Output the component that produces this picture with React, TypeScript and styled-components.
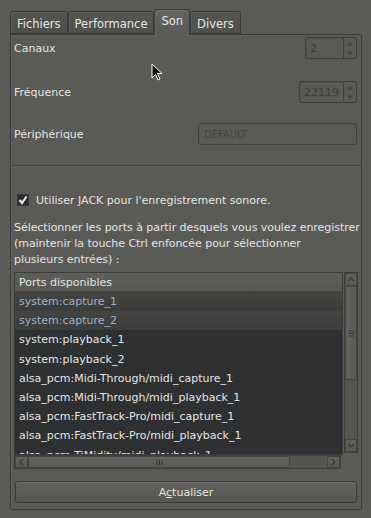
import React from "react";
import styled, { createGlobalStyle } from "styled-components";

const GlobalStyle = createGlobalStyle`
  html, body {
    margin: 0;
    padding: 0;
    background: #5a5b57;
  }
  body {
    font-family: "DejaVu Sans", "Liberation Sans", sans-serif;
    font-size: 11px;
    color: #e4e4e2;
  }
`;

const Window = styled.div`
  position: relative;
  width: 371px;
  height: 518px;
  box-sizing: border-box;
  padding: 10px 9px 8px 10px;
  display: flex;
  flex-direction: column;
  background: #5a5b57;
  overflow: hidden;
`;

const TabBar = styled.div`
  display: flex;
  align-items: flex-end;
  height: 25px;
  position: relative;
  z-index: 1;
  margin-bottom: -1px;
`;

const Tab = styled.div<{ $active?: boolean }>`
  box-sizing: border-box;
  height: ${(p) => (p.$active ? "26px" : "23px")};
  padding: ${(p) => (p.$active ? "4px 6px 0" : "5px 6px 0")};
  margin-bottom: ${(p) => (p.$active ? "0" : "1px")};
  border: 1px solid #3c3d3a;
  border-bottom: ${(p) => (p.$active ? "none" : "1px solid #3c3d3a")};
  border-radius: 3px 3px 0 0;
  background: ${(p) =>
    p.$active
      ? "linear-gradient(#63645f, #5a5b57)"
      : "linear-gradient(#555652, #4f504c)"};
  box-shadow: inset 1px 1px 0 rgba(255, 255, 255, 0.06);
  color: #e6e6e4;
  font-size: 11.5px;
  white-space: nowrap;
`;

const Panel = styled.div`
  flex: 1;
  box-sizing: border-box;
  border: 1px solid #3c3d3a;
  border-radius: 0 2px 2px 2px;
  padding: 2px 4px 6px 3px;
  display: flex;
  flex-direction: column;
  box-shadow: inset 1px 1px 0 rgba(255, 255, 255, 0.04);
`;

const FormRow = styled.div<{ $gap: number }>`
  display: flex;
  align-items: center;
  justify-content: space-between;
  height: 22px;
  margin-bottom: ${(p) => p.$gap}px;
  font-size: 11px;
`;

const SpinBox = styled.div<{ $width: number }>`
  display: flex;
  width: ${(p) => p.$width}px;
  height: 22px;
  box-sizing: border-box;
  border: 1px solid #40413e;
  border-radius: 2px;
`;

const SpinValue = styled.div`
  flex: 1;
  display: flex;
  align-items: center;
  padding-left: 4px;
  border-right: 1px solid #40413e;
  color: #3e3f3c;
  font-size: 11px;
  box-shadow: inset 1px 1px 0 rgba(0, 0, 0, 0.08);
`;

const SpinButtons = styled.div`
  width: 12px;
  display: flex;
  flex-direction: column;
  align-items: center;
  justify-content: space-around;
  color: #464744;
  font-size: 6px;
  line-height: 6px;
`;

const Entry = styled.div`
  width: 159px;
  height: 22px;
  box-sizing: border-box;
  border: 1px solid #41423f;
  border-radius: 3px;
  padding-left: 5px;
  display: flex;
  align-items: center;
  color: #454643;
  font-size: 10px;
`;

const Separator = styled.div`
  height: 0;
  margin: 0 -4px 0 -3px;
  border-top: 1px solid #454642;
  border-bottom: 1px solid #62635f;
`;

const CheckRow = styled.label`
  display: flex;
  align-items: center;
  gap: 7px;
  margin: 26px 0 0 3px;
  height: 14px;
  font-size: 11px;
`;

const CheckBox = styled.span`
  width: 12px;
  height: 12px;
  box-sizing: border-box;
  background: #2b2c2c;
  border: 1px solid #3a3b39;
  display: flex;
  align-items: center;
  justify-content: center;
`;

const Para = styled.p`
  margin: 13px -4px 4px 0;
  font-size: 11px;
  line-height: 16px;
  white-space: nowrap;
  letter-spacing: -0.05px;
`;

const ListArea = styled.div`
  display: grid;
  grid-template-columns: 329px 1fr;
  grid-template-rows: 183px 14px;
  column-gap: 1px;
`;

const ListBox = styled.div`
  background: #2e3032;
  border: 1px solid #3c3d3a;
  overflow: hidden;
`;

const ListHeader = styled.div`
  height: 19px;
  box-sizing: border-box;
  padding: 3px 0 0 4px;
  background: linear-gradient(#5e5f5b, #575854);
  border-bottom: 1px solid #454642;
  font-size: 11px;
`;

const ListRow = styled.div<{ $selected?: boolean }>`
  height: 19.2px;
  padding-left: 4px;
  display: flex;
  align-items: center;
  font-size: 11px;
  white-space: nowrap;
  color: ${(p) => (p.$selected ? "#9ab2cc" : "#e6e6e4")};
  background: ${(p) =>
    p.$selected ? "linear-gradient(#444543, #3b3c3b)" : "transparent"};
`;

const VScroll = styled.div`
  display: flex;
  flex-direction: column;
  width: 14px;
  height: 181px;
  box-sizing: border-box;
  border: 1px solid #3e3f3c;
  background: #555652;
`;

const HScroll = styled.div`
  display: flex;
  height: 14px;
  width: 327px;
  box-sizing: border-box;
  border: 1px solid #3e3f3c;
  background: #555652;
`;

const ArrowBtn = styled.div<{ $v?: boolean }>`
  ${(p) => (p.$v ? "height: 13px;" : "width: 13px;")}
  flex: none;
  display: flex;
  align-items: center;
  justify-content: center;
  background: linear-gradient(#61625e, #585955);
  box-sizing: border-box;
  border: 1px solid #464743;
`;

const Thumb = styled.div<{ $v?: boolean; $size: number }>`
  ${(p) => (p.$v ? `height: ${p.$size}px;` : `width: ${p.$size}px;`)}
  flex: none;
  display: flex;
  align-items: center;
  justify-content: center;
  box-sizing: border-box;
  border: 1px solid #464743;
  background: ${(p) =>
    p.$v
      ? "linear-gradient(90deg, #62635f, #5a5b57)"
      : "linear-gradient(#62635f, #5a5b57)"};
`;

const Trough = styled.div`
  flex: 1;
`;

const Button = styled.div`
  margin: 12px 0 0 1px;
  height: 22px;
  box-sizing: border-box;
  border: 1px solid #3c3d3a;
  border-radius: 3px;
  background: linear-gradient(#61625e, #575854);
  box-shadow: inset 0 1px 0 rgba(255, 255, 255, 0.06);
  display: flex;
  align-items: center;
  justify-content: center;
  font-size: 11px;
`;

const Mnemonic = styled.span`
  text-decoration: underline;
`;

const Cursor = styled.svg`
  position: absolute;
  left: 151px;
  top: 63px;
`;

const ports = [
  "system:capture_1",
  "system:capture_2",
  "system:playback_1",
  "system:playback_2",
  "alsa_pcm:Midi-Through/midi_capture_1",
  "alsa_pcm:Midi-Through/midi_playback_1",
  "alsa_pcm:FastTrack-Pro/midi_capture_1",
  "alsa_pcm:FastTrack-Pro/midi_playback_1",
  "alsa_pcm:TiMidity/midi_playback_1",
];

const Chevron = ({ dir }: { dir: "up" | "down" | "left" | "right" }) => {
  const pts = {
    up: "1,5 4,2 7,5",
    down: "1,2 4,5 7,2",
    left: "5,1 2,4 5,7",
    right: "2,1 5,4 2,7",
  }[dir];
  return (
    <svg width="8" height="8" viewBox="0 0 8 8">
      <polyline points={pts} fill="none" stroke="#3a3b38" strokeWidth="1.3" />
    </svg>
  );
};

const Grip = ({ v }: { v?: boolean }) => (
  <svg width="7" height="7" viewBox="0 0 7 7">
    {[1, 3.5, 6].map((o) =>
      v ? (
        <line key={o} x1="1" x2="6" y1={o} y2={o} stroke="#33342f" />
      ) : (
        <line key={o} y1="1" y2="6" x1={o} x2={o} stroke="#33342f" />
      )
    )}
  </svg>
);

export default function App() {
  return (
    <Window>
      <GlobalStyle />
      <TabBar>
        <Tab>Fichiers</Tab>
        <Tab>Performance</Tab>
        <Tab $active>Son</Tab>
        <Tab>Divers</Tab>
      </TabBar>
      <Panel>
        <FormRow $gap={22}>
          <span>Canaux</span>
          <SpinBox $width={52}>
            <SpinValue>2</SpinValue>
            <SpinButtons>
              <span>▲</span>
              <span>▼</span>
            </SpinButtons>
          </SpinBox>
        </FormRow>
        <FormRow $gap={20}>
          <span>Fréquence</span>
          <SpinBox $width={58}>
            <SpinValue>22119</SpinValue>
            <SpinButtons>
              <span>▲</span>
              <span>▼</span>
            </SpinButtons>
          </SpinBox>
        </FormRow>
        <FormRow $gap={20}>
          <span>Périphérique</span>
          <Entry>DEFAULT</Entry>
        </FormRow>
        <Separator />
        <CheckRow>
          <CheckBox>
            <svg width="10" height="10" viewBox="0 0 10 10">
              <polyline
                points="1.5,5 4,8 8.5,1.5"
                fill="none"
                stroke="#f0f0f0"
                strokeWidth="2"
              />
            </svg>
          </CheckBox>
          Utiliser JACK pour l'enregistrement sonore.
        </CheckRow>
        <Para>
          Sélectionner les ports à partir desquels vous voulez enregistrer
          <br />
          (maintenir la touche Ctrl enfoncée pour sélectionner
          <br />
          plusieurs entrées) :
        </Para>
        <ListArea>
          <ListBox>
            <ListHeader>Ports disponibles</ListHeader>
            {ports.map((p, i) => (
              <ListRow key={p} $selected={i < 2}>
                {p}
              </ListRow>
            ))}
          </ListBox>
          <VScroll>
            <ArrowBtn $v>
              <Chevron dir="up" />
            </ArrowBtn>
            <Thumb $v $size={94}>
              <Grip v />
            </Thumb>
            <Trough />
            <ArrowBtn $v>
              <Chevron dir="down" />
            </ArrowBtn>
          </VScroll>
          <HScroll>
            <ArrowBtn>
              <Chevron dir="left" />
            </ArrowBtn>
            <Thumb $size={262}>
              <Grip />
            </Thumb>
            <Trough />
            <ArrowBtn>
              <Chevron dir="right" />
            </ArrowBtn>
          </HScroll>
        </ListArea>
        <Button>
          <span>
            A<Mnemonic>c</Mnemonic>tualiser
          </span>
        </Button>
      </Panel>
      <Cursor width="12" height="18" viewBox="0 0 12 18">
        <path
          d="M1 1 L1 15 L4.5 11.5 L7 17 L9 16 L6.5 10.5 L11 10.5 Z"
          fill="#111"
          stroke="#fff"
          strokeWidth="1"
        />
      </Cursor>
    </Window>
  );
}
